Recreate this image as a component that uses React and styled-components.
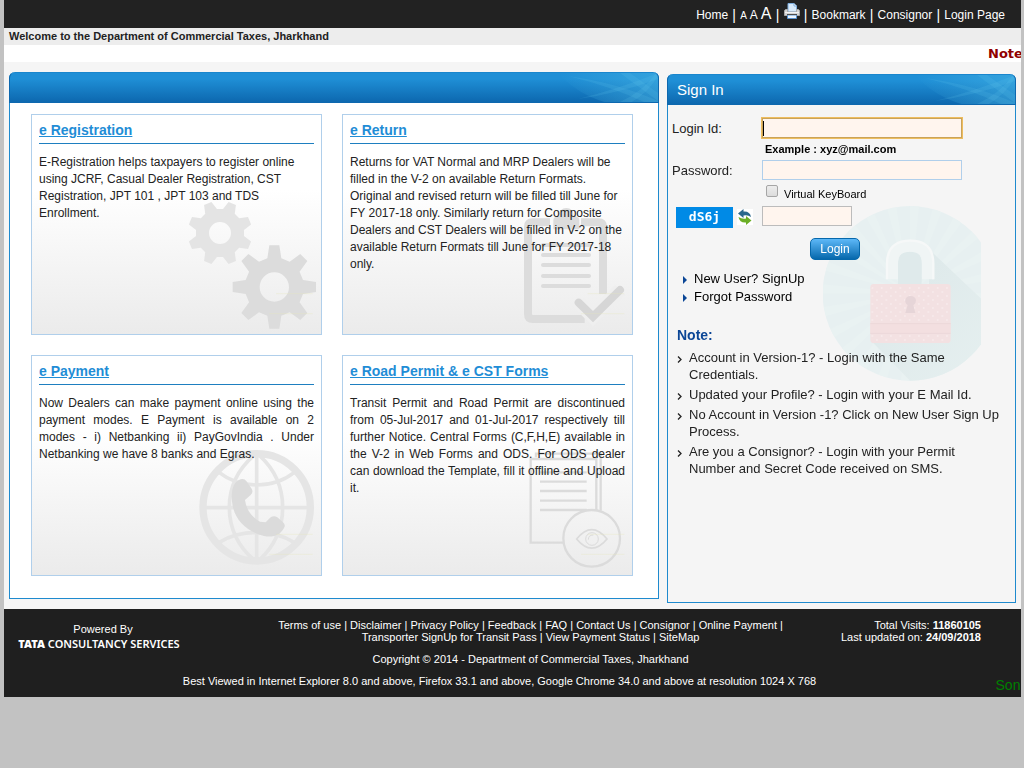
import React from "react";
import styled, { createGlobalStyle, css } from "styled-components";

const Global = createGlobalStyle`
  * { box-sizing: border-box; }
  body {
    margin: 0;
    background: #c2c2c2;
    color: #222;
    font-family: "Liberation Sans", Arial, sans-serif;
    font-size: 12px;
  }
  a { color: inherit; text-decoration: none; }
  ul, h2, h3, p { margin: 0; padding: 0; list-style: none; }
`;

const Page = styled.div`
  margin: 0 3px 0 4px;
  background: #f5f5f5;
`;

const TopBar = styled.nav`
  display: flex;
  align-items: center;
  justify-content: flex-end;
  gap: 4px;
  height: 28px;
  padding: 1px 16px 0 0;
  background: #222;
  color: #fff;
  line-height: 20px;
`;

const Pipe = styled.span`
  width: 4px;
  font-size: 14px;
  text-align: center;
`;

const SizeGroup = styled.span`
  display: flex;
  align-items: baseline;
  gap: 3px;
`;

const SizeButton = styled.button`
  padding: 0;
  border: 0;
  background: none;
  color: inherit;
  font: ${(p) => p.$size}px/20px "Liberation Sans", Arial, sans-serif;
`;

const IconButton = styled.button`
  display: block;
  padding: 0;
  border: 0;
  background: none;
  svg { display: block; }
`;

const Printer = styled(IconButton)`
  margin-bottom: 6px;
`;

const Welcome = styled.p`
  padding-left: 5px !important;
  background: #ededed;
  font-size: 11px;
  font-weight: bold;
  line-height: 17px;
`;

const Ticker = styled.p`
  height: 17px;
  margin-bottom: 10px !important;
  padding-left: calc(100% - 33px) !important;
  overflow: hidden;
  background: #fff;
  color: #900000;
  font: bold 13px/18px "DejaVu Sans", Verdana, sans-serif;
  white-space: nowrap;
`;

const Main = styled.main`
  display: grid;
  grid-template-columns: 650fr 349fr;
  align-items: start;
  gap: 8px;
  padding: 0 5px 6px;
`;

const Panel = styled.section`
  border: 1px solid #1e8ace;
  border-top: 0;
  border-radius: 6px 6px 0 0;
  min-width: 0;
`;

const ServicesPanel = styled(Panel)`
  background: #fff;
`;

const SignInPanel = styled(Panel)`
  min-height: 529px;
  margin-top: 2px;
`;

const PanelHeader = styled.header`
  display: flex;
  justify-content: space-between;
  align-items: center;
  height: 31px;
  margin: 0 -1px;
  padding-left: 9px;
  overflow: hidden;
  border: 1px solid #0d68af;
  border-top-color: #1a86cd;
  border-radius: 6px 6px 0 0;
  background: linear-gradient(#1f8fd6 20%, #0d68af);
  color: #fff;
  h2 { font-size: 15px; font-weight: normal; }
`;

const Cards = styled.div`
  display: grid;
  grid-template-columns: 1fr 1fr;
  gap: 20px;
  padding: 11px 25px 22px 21px;
`;

const Card = styled.article`
  position: relative;
  z-index: 0;
  min-height: 221px;
  padding: 7px;
  border: 1px solid #b0cfeb;
  background: linear-gradient(#fff 34%, #ebebeb);
  line-height: 17px;
  h3 {
    margin-bottom: 10px;
    padding-bottom: 4px;
    border-bottom: 1px solid #1e7fc0;
    color: #1f8dd6;
    font-size: 14px;
  }
  h3 a { text-decoration: underline; }
  p { text-align: ${(p) => (p.$justify ? "justify" : "left")}; }
`;

const Art = styled.svg`
  position: absolute;
  right: 0;
  bottom: 0;
  z-index: -1;
`;

const SignInBody = styled.div`
  position: relative;
  z-index: 0;
  padding: 13px 14px 0 4px;
  font-size: 13px;
`;

const LockArt = styled.svg`
  position: absolute;
  top: 101px;
  right: 34px;
  z-index: -1;
`;

const Form = styled.form`
  display: grid;
  grid-template-columns: 90px 1fr;
  grid-template-rows: 20px 22px 20px 26px 22px;
  align-items: center;
`;

const fieldColors = css`
  background-color: #fff5ee;
  border: 1px solid ${(p) => (p.$plain ? "#bcbcbc" : "#b0cfeb")};
`;

const Field = styled.input`
  ${fieldColors}
  align-self: start;
  width: ${(p) => (p.$plain ? "90px" : "200px")};
  height: 20px;
  padding: 0 2px;
  font-size: 12px;
  &:focus {
    border-color: #c9a35a;
    outline: 1px solid #eebd5e;
    background-image: linear-gradient(#000, #000);
    background-position: 0 2px;
    background-repeat: no-repeat;
    background-size: 1px 15px;
    caret-color: transparent;
  }
`;

const Example = styled.span`
  grid-column: 2;
  padding-left: 3px;
  color: #000;
  font-size: 11px;
  font-weight: bold;
`;

const KeyboardRow = styled.div`
  grid-column: 2;
  display: flex;
  align-items: center;
  gap: 6px;
  padding: 0 0 2px 4px;
  font-size: 11px;
  label { padding-top: 3px; color: #000; }
`;

const Check = styled.input`
  appearance: none;
  width: 12px;
  height: 12px;
  margin: 0 0 3px;
  border: 1px solid #a6a6a6;
  border-radius: 2px;
  background: linear-gradient(#ededed, #dcdcdc);
  &:checked { background: #1f8dd6; }
`;

const CaptchaRow = styled.div`
  display: flex;
  align-items: center;
  gap: 4px;
  padding-left: 4px;
`;

const Captcha = styled.span`
  width: 57px;
  height: 21px;
  background: #008ae6;
  color: #fff;
  font: bold 13px/20px "DejaVu Sans Mono", monospace;
  text-align: center;
`;

const LoginButton = styled.button`
  grid-column: 2;
  width: 50px;
  height: 22px;
  margin: 10px 0 0 48px;
  padding: 0;
  border: 1px solid #0668ac;
  border-radius: 5px;
  background: linear-gradient(#5db8f8, #0668ac);
  color: #fff;
  font: 12px "Liberation Sans", Arial, sans-serif;
`;

const Links = styled.ul`
  margin: 10px 0 20px !important;
  padding-left: 10px !important;
  color: #000;
  line-height: 18px;
  li { display: flex; align-items: center; gap: 6px; }
  svg { margin-top: 2px; }
`;

const NoteTitle = styled.h3`
  padding-left: 5px !important;
  color: #0b4696;
  font-size: 14px;
  line-height: 18px;
`;

const Notes = styled.ul`
  display: grid;
  gap: 3px;
  margin-top: 5px !important;
  padding-left: 5px !important;
  line-height: 17px;
  li { display: flex; gap: 6px; }
  svg { flex: none; margin-top: 7px; }
`;

const Footer = styled.footer`
  min-height: 88px;
  padding-top: 10px;
  background: #1f1f1f;
  color: #fff;
  font-size: 11px;
  line-height: 12px;
`;

const FooterTop = styled.div`
  display: grid;
  grid-template-columns: 228px 1fr 152px;
  column-gap: 30px;
  padding-right: 40px;
  text-align: center;
`;

const PoweredBy = styled.div`
  width: 190px;
  padding: 4px 0 0 8px;
`;

const Brand = styled.div`
  margin: 2px 0 0 -8px;
  color: #fff;
  font: 600 11px/13px "Noto Sans", sans-serif;
  white-space: nowrap;
  b { font-weight: 900; }
`;

const FooterLinks = styled.div`
  a { white-space: nowrap; }
  p { margin-top: 10px; }
`;

const Visits = styled.div`
  text-align: right;
`;

const FooterBottom = styled.div`
  display: flex;
  align-items: center;
  margin-top: 3px;
  text-align: center;
  line-height: 18px;
  p { flex: 1; }
`;

const Scrolling = styled.span`
  width: 26px;
  margin-top: 8px;
  overflow: hidden;
  color: #008000;
  font-size: 14px;
  white-space: nowrap;
`;

function Rays() {
  return (
    <svg width="100" height="30" viewBox="0 0 100 30" aria-hidden="true">
      <defs>
        <linearGradient id="glow">
          <stop offset="0" stopColor="#48b5e4" stopOpacity="0" />
          <stop offset="1" stopColor="#48b5e4" stopOpacity=".5" />
        </linearGradient>
      </defs>
      <path d="M0 0H100V30H50Q20 22 0 0Z" fill="url(#glow)" />
      <g fill="#6acaf0" fillOpacity=".14">
        <path d="M20 26Q60 16 100 0V6Q62 20 20 26Z" />
        <path d="M10 3Q60 10 100 28V30H88Q55 14 10 3Z" />
        <path d="M62 0L72 0 100 20V28Z" />
        <path d="M60 30Q86 18 98 0L100 3Q90 20 72 30Z" />
      </g>
    </svg>
  );
}

function PrinterIcon() {
  return (
    <svg width="16" height="17" viewBox="0 0 16 17" aria-hidden="true">
      <path d="M4 .5H10L12.500 3V9H4Z" fill="#d8eafa" stroke="#7eaede" />
      <path d="M10 .5V3H12.500" fill="#fff" stroke="#7eaede" />
      <path d="M1.500 6.500H3.500V9H12.500V6.500H14.500Q15.500 7 15.500 8V12.500H.5V8Q.5 7 1.500 6.500Z" fill="#d4d4d4" stroke="#aaa" />
      <path d="M1 9.500H15" stroke="#f4f4f4" />
      <path d="M3.500 12H12.500V15.500H3.500Z" fill="#eef6ff" stroke="#5a93cf" />
      <path d="M3 11.500H13" stroke="#4d4d4d" />
    </svg>
  );
}

function RefreshIcon() {
  return (
    <svg width="16" height="16" viewBox="0 0 16 16" aria-hidden="true">
      <path d="M0 0H16V16H0Z" fill="#fff" />
      <path d="M1 4.500L6.500 0V2.500Q13 2 14 8Q11 5.800 6.500 6.500V9Z" fill="#29688c" />
      <path d="M14.500 11.500L9 16V13.500Q2.500 14 1.500 8Q5 10.200 9 9.500V7Z" fill="#6bae26" />
    </svg>
  );
}

function gearPath(cx, cy, body, outer, base, tip, turn) {
  let d = "";
  for (let i = 0; i < 8; i += 1) {
    const a = ((i * 45 + turn) * Math.PI) / 180;
    const at = (r, w) =>
      `${(cx + r * Math.cos(a) - w * Math.sin(a)).toFixed(1)} ${(cy + r * Math.sin(a) + w * Math.cos(a)).toFixed(1)}`;
    d += `${i ? "L" : "M"}${at(body, -base)}L${at(outer, -tip)}L${at(outer, tip)}L${at(body, base)}`;
  }
  return `${d}Z`;
}

function Gear({ cx, cy, body, outer, base, tip, hole, turn, fill }) {
  const ring = `M${cx - hole} ${cy}a${hole} ${hole} 0 1 0 ${hole * 2} 0a${hole} ${hole} 0 1 0 ${-hole * 2} 0Z`;
  return <path fillRule="evenodd" fill={fill} d={gearPath(cx, cy, body, outer, base, tip, turn) + ring} />;
}

const Streaks = ({ y, x2 }) => (
  <path d={`M${x2 - 110} ${y}H${x2}M${x2 - 130} ${y + 60}H${x2}`} stroke="#e8e8b8" strokeWidth="3" opacity=".3" />
);

function GearsArt() {
  return (
    <Art width="141" height="144" viewBox="0 0 423 432" aria-hidden="true">
      <Gear cx={120} cy={129} body={70} outer={96} base={19} tip={12} hole={33} turn={22.5} fill="#e4e4e4" />
      <Gear cx={283} cy={291} body={86} outer={125} base={21} tip={15} hole={44} turn={0} fill="#dcdcdc" />
      <Streaks y={311} x2={398} />
    </Art>
  );
}

function ClipboardArt() {
  return (
    <Art width="122" height="144" viewBox="0 0 366 432" aria-hidden="true">
      <g fill="none" stroke="#dcdcdc">
        <path d="M120 97H68Q54 97 54 111V372Q54 387 69 387H224M213 97H265Q279 97 279 111V312" strokeWidth="24" />
        <path d="M99 165H237M99 195H237M99 225H237M99 258H237M99 288H237" strokeWidth="12" strokeLinecap="round" />
      </g>
      <path d="M130 118V90Q130 80 148 78Q148 54 169 54Q190 54 190 78Q208 80 208 90V118Z" fill="#dcdcdc" />
      <path d="M206 338L249 380L330 300" fill="none" stroke="#efefef" strokeWidth="42" />
      <path d="M206 338L249 380L330 300" fill="none" stroke="#d6d6d6" strokeWidth="24" strokeLinecap="round" />
      <Streaks y={311} x2={343} />
    </Art>
  );
}

function GlobeArt() {
  return (
    <Art width="141" height="135" viewBox="0 0 423 405" aria-hidden="true">
      <g fill="none" stroke="#e5e5e5">
        <circle cx="230" cy="202" r="161" strokeWidth="22" />
        <path d="M230 41V363M69 203H391M222 46Q148 110 148 202Q148 296 222 360M238 46Q308 110 308 202Q308 296 238 360M118 98Q165 135 230 135Q295 135 342 98M118 307Q165 277 230 277Q295 277 342 307" strokeWidth="11" />
      </g>
      <path d="M156 185C153 150 160 125 182 118Q193 115 199 123L215 146Q221 157 212 165L195 180Q200 222 240 245L257 247L272 232Q282 225 292 232L309 247Q318 256 312 264C298 288 277 293 252 288C196 274 161 236 156 185Z" fill="#dbdbdb" />
      <Streaks y={283} x2={398} />
    </Art>
  );
}

function DocumentArt() {
  return (
    <Art width="122" height="135" viewBox="0 0 366 405" aria-hidden="true">
      <g fill="none" stroke="#dbdbdb" strokeWidth="7">
        <path d="M160 308H62V57H259V210M78 52V41H272V212" />
        <path d="M90 97H230M90 125H230M90 153H230M90 182H230M90 210H230" />
        <circle cx="245" cy="295" r="85" />
        <g strokeWidth="5">
          <path d="M200 297Q245 241 291 297Q245 352 200 297Z" />
          <circle cx="246" cy="297" r="19" strokeWidth="3" />
          <path d="M235 299Q235 285 250 285" strokeWidth="3" />
        </g>
      </g>
      <Streaks y={283} x2={343} />
    </Art>
  );
}

function Lock() {
  const rays = Array.from({ length: 24 }, (_, i) => {
    const a = (i * 15 * Math.PI) / 180;
    const b = ((i * 15 + 6) * Math.PI) / 180;
    return `M261 262L${(261 + 262 * Math.cos(a)).toFixed(0)} ${(262 + 262 * Math.sin(a)).toFixed(0)}L${(261 + 262 * Math.cos(b)).toFixed(0)} ${(262 + 262 * Math.sin(b)).toFixed(0)}Z`;
  }).join("");
  return (
    <LockArt width="158" height="175" viewBox="0 0 474 525" aria-hidden="true">
      <defs>
        <clipPath id="disc"><circle cx="261" cy="262" r="262" /></clipPath>
        <linearGradient id="shade" x1="0" y1="0" x2="1" y2="1">
          <stop offset=".3" stopColor="#dfeaeb" />
          <stop offset="1" stopColor="#e6f0f0" />
        </linearGradient>
        <pattern id="dots" width="28" height="24" patternUnits="userSpaceOnUse">
          <circle cx="8" cy="6" r="2.500" fill="#faf0f0" />
          <circle cx="22" cy="18" r="2.500" fill="#faf0f0" />
        </pattern>
      </defs>
      <g clipPath="url(#disc)">
        <path d="M0 0H474V525H0Z" fill="#e7f0f1" />
        <path d={rays} fill="#e9f2f2" />
        <path d="M318 130L530 330V525H262L150 410H380V240H318Z" fill="url(#shade)" />
        <path d="M225 240V170Q225 137 260 137Q296 137 296 170V240Z" fill="#dfeaeb" />
      </g>
      <path d="M207 220V174Q207 119 262 119Q315 119 315 174V220" fill="none" stroke="#f0f5f5" strokeWidth="36" />
      <path d="M192 220V174Q192 104 262 104Q331 104 331 174V220" fill="none" stroke="#f6f8f8" strokeWidth="7" />
      <rect x="142" y="234" width="241" height="177" rx="10" fill="#f3e1e2" />
      <rect x="144" y="242" width="237" height="165" rx="8" fill="url(#dots)" />
      <path d="M142 351H383V382H142Z" fill="#f3dfe0" />
      <path d="M142 353H383M142 382H383" stroke="#ecd8da" strokeWidth="3" />
      <path d="M254 297Q245 291 247 281Q250 270 262 270Q276 270 279 282Q280 291 271 298L277 321H247Z" fill="#e6d5d8" />
    </LockArt>
  );
}

const services = [
  {
    title: "e Registration",
    art: <GearsArt />,
    text: "E-Registration helps taxpayers to register online using JCRF, Casual Dealer Registration, CST Registration, JPT 101 , JPT 103 and TDS Enrollment.",
  },
  {
    title: "e Return",
    art: <ClipboardArt />,
    text: "Returns for VAT Normal and MRP Dealers will be filled in the V-2 on available Return Formats. Original and revised return will be filled till June for FY 2017-18 only. Similarly return for Composite Dealers and CST Dealers will be filled in V-2 on the available Return Formats till June for FY 2017-18 only.",
  },
  {
    title: "e Payment",
    art: <GlobeArt />,
    justify: true,
    text: "Now Dealers can make payment online using the payment modes. E Payment is available on 2 modes - i) Netbanking ii) PayGovIndia . Under Netbanking we have 8 banks and Egras.",
  },
  {
    title: "e Road Permit & e CST Forms",
    art: <DocumentArt />,
    justify: true,
    text: "Transit Permit and Road Permit are discontinued from 05-Jul-2017 and 01-Jul-2017 respectively till further Notice. Central Forms (C,F,H,E) available in the V-2 in Web Forms and ODS. For ODS dealer can download the Template, fill it offline and Upload it.",
  },
];

const notes = [
  "Account in Version-1? - Login with the Same Credentials.",
  "Updated your Profile? - Login with your E Mail Id.",
  "No Account in Version -1? Click on New User Sign Up Process.",
  "Are you a Consignor? - Login with your Permit Number and Secret Code received on SMS.",
];

const footerLinks = [
  "Terms of use", "Disclaimer", "Privacy Policy", "Feedback", "FAQ", "Contact Us", "Consignor",
  "Online Payment", "Transporter SignUp for Transit Pass", "View Payment Status", "SiteMap",
];

export default function App() {
  return (
    <>
      <Global />
      <Page>
        <TopBar>
          <a href="#home">Home</a>
          <Pipe>|</Pipe>
          <SizeGroup>
            <SizeButton $size={10}>A</SizeButton>
            <SizeButton $size={12}>A</SizeButton>
            <SizeButton $size={16}>A</SizeButton>
          </SizeGroup>
          <Pipe>|</Pipe>
          <Printer aria-label="Print"><PrinterIcon /></Printer>
          <Pipe>|</Pipe>
          <a href="#bookmark">Bookmark</a>
          <Pipe>|</Pipe>
          <a href="#consignor">Consignor</a>
          <Pipe>|</Pipe>
          <a href="#login">Login Page</a>
        </TopBar>
        <Welcome>Welcome to the Department of Commercial Taxes, Jharkhand</Welcome>
        <Ticker>Note</Ticker>

        <Main>
          <ServicesPanel>
            <PanelHeader><span /><Rays /></PanelHeader>
            <Cards>
              {services.map((s) => (
                <Card key={s.title} $justify={s.justify}>
                  <h3><a href="#service">{s.title}</a></h3>
                  <p>{s.text}</p>
                  {s.art}
                </Card>
              ))}
            </Cards>
          </ServicesPanel>

          <SignInPanel>
            <PanelHeader><h2>Sign In</h2><Rays /></PanelHeader>
            <SignInBody>
              <Lock />
              <Form onSubmit={(e) => e.preventDefault()}>
                <label htmlFor="login">Login Id:</label>
                <Field id="login" type="text" autoFocus />
                <Example>Example : xyz@mail.com</Example>
                <label htmlFor="password">Password:</label>
                <Field id="password" type="password" />
                <KeyboardRow>
                  <Check id="keyboard" type="checkbox" />
                  <label htmlFor="keyboard">Virtual KeyBoard</label>
                </KeyboardRow>
                <CaptchaRow>
                  <Captcha>dS6j</Captcha>
                  <IconButton type="button" aria-label="Refresh code"><RefreshIcon /></IconButton>
                </CaptchaRow>
                <Field $plain type="text" aria-label="Code" />
                <LoginButton type="submit">Login</LoginButton>
              </Form>
              <Links>
                {["New User? SignUp", "Forgot Password"].map((t) => (
                  <li key={t}>
                    <svg width="6" height="8" viewBox="0 0 6 8" aria-hidden="true">
                      <path d="M1 0L5 4L1 8Z" fill="#0b4696" />
                    </svg>
                    <a href="#account">{t}</a>
                  </li>
                ))}
              </Links>
              <NoteTitle>Note:</NoteTitle>
              <Notes>
                {notes.map((n) => (
                  <li key={n}>
                    <svg width="6" height="7" viewBox="0 0 6 7" aria-hidden="true">
                      <path d="M1 .5L4 3.500L1 6.500" fill="none" stroke="#222" strokeWidth="1.300" />
                    </svg>
                    <span>{n}</span>
                  </li>
                ))}
              </Notes>
            </SignInBody>
          </SignInPanel>
        </Main>

        <Footer>
          <FooterTop>
            <PoweredBy>
              Powered By
              <Brand><b>TATA</b> CONSULTANCY SERVICES</Brand>
            </PoweredBy>
            <FooterLinks>
              {footerLinks.map((t, i) => (
                <React.Fragment key={t}>
                  <a href="#info">{t}</a>
                  {i < footerLinks.length - 1 && " | "}
                </React.Fragment>
              ))}
              <p>Copyright © 2014 - Department of Commercial Taxes, Jharkhand</p>
            </FooterLinks>
            <Visits>
              Total Visits: <b>11860105</b><br />
              Last updated on: <b>24/09/2018</b>
            </Visits>
          </FooterTop>
          <FooterBottom>
            <p>Best Viewed in Internet Explorer 8.0 and above, Firefox 33.1 and above, Google Chrome 34.0 and above at resolution 1024 X 768</p>
            <Scrolling>Son</Scrolling>
          </FooterBottom>
        </Footer>
      </Page>
    </>
  );
}
